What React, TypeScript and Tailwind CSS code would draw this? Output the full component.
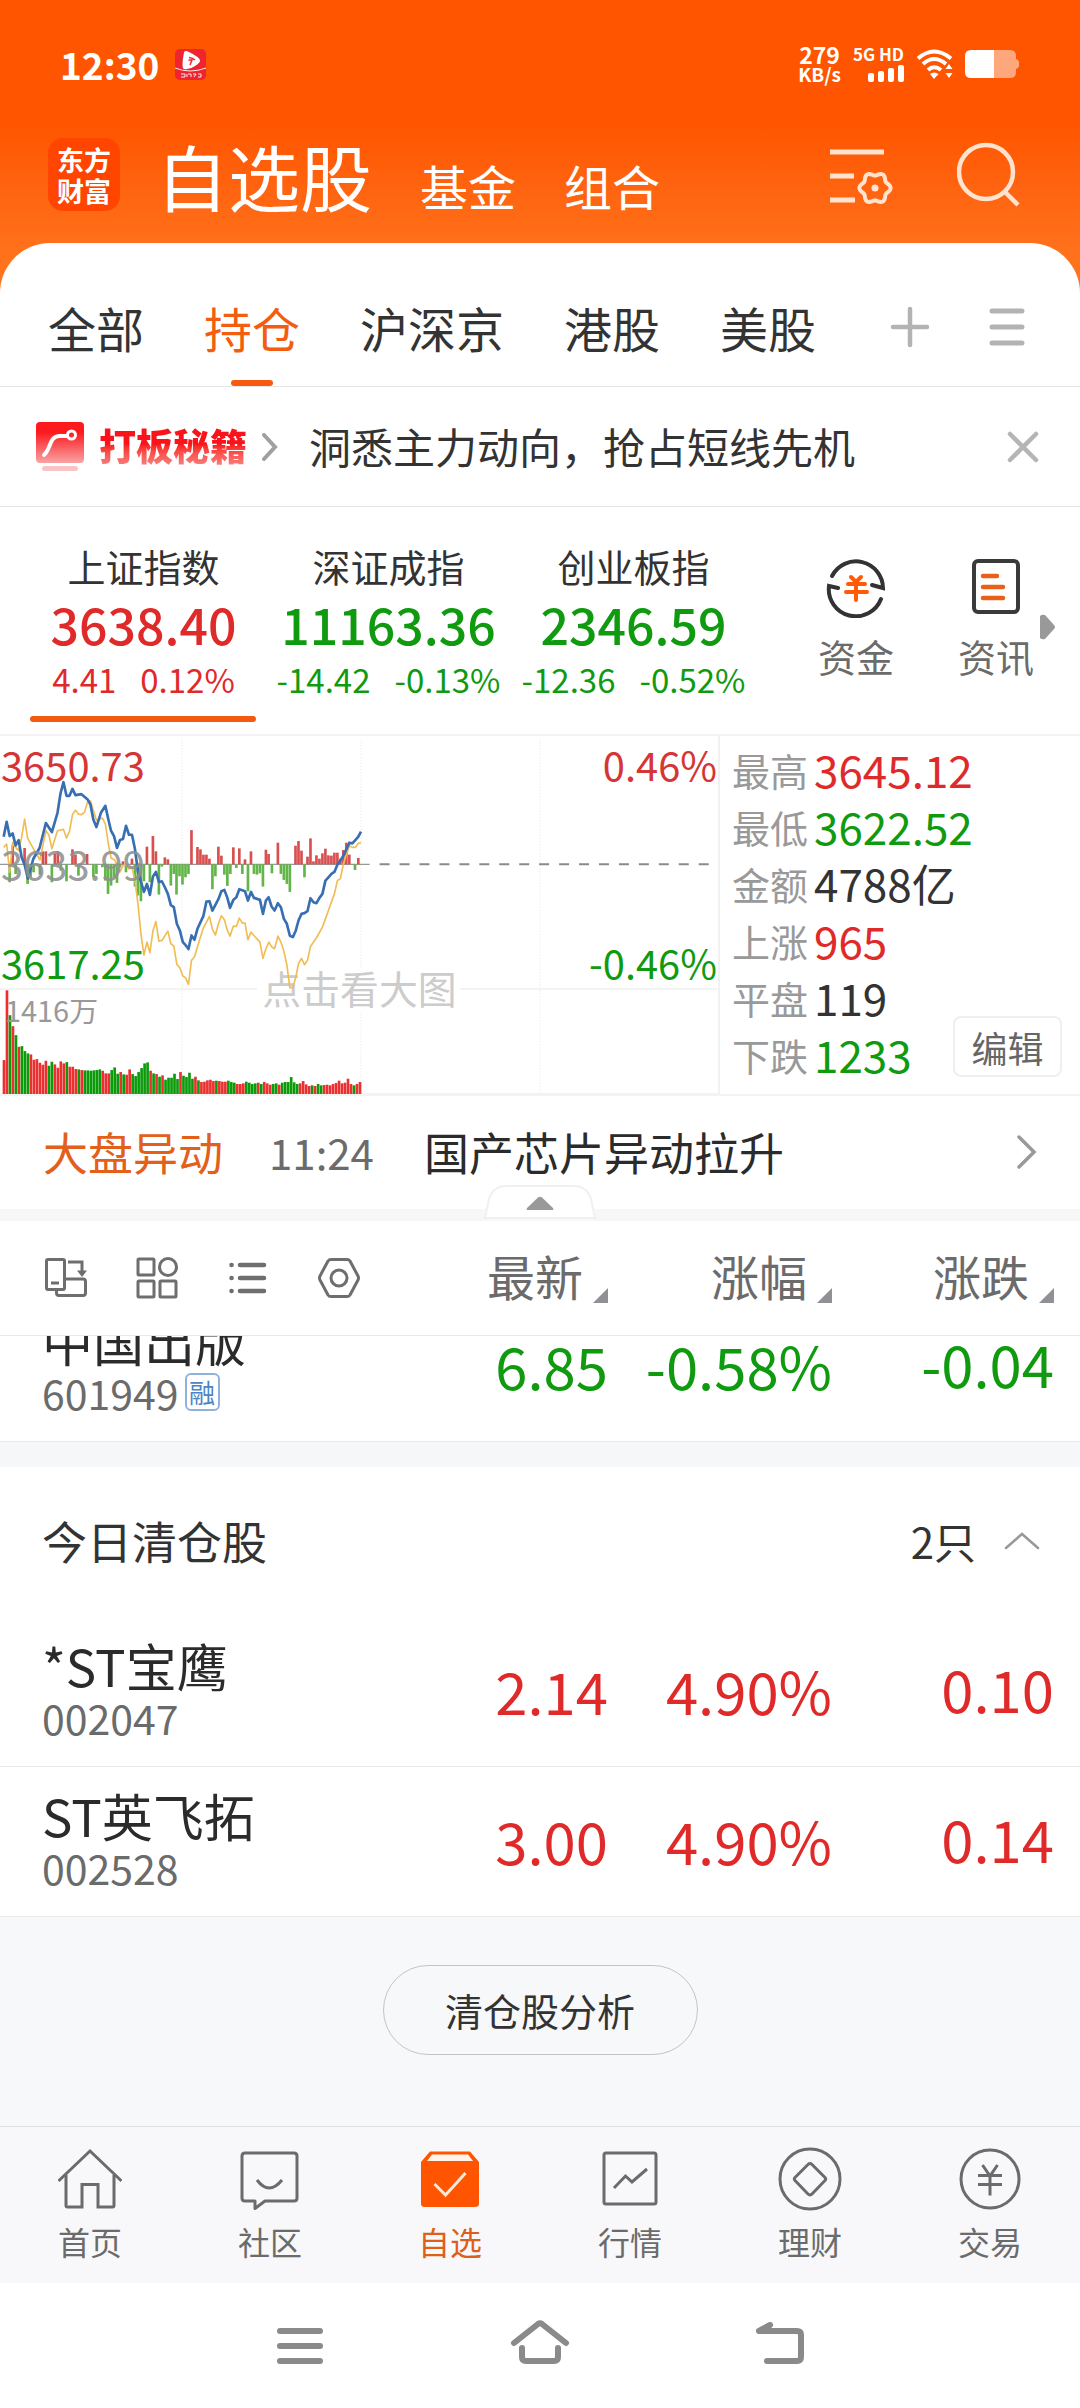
import React from "react";

const GREEN = "#109a10";

const categoryTabs = ["全部", "持仓", "沪深京", "港股", "美股"];

const indices = [
  { name: "上证指数", value: "3638.40", change: "4.41", percent: "0.12%", up: true },
  { name: "深证成指", value: "11163.36", change: "-14.42", percent: "-0.13%", up: false },
  { name: "创业板指", value: "2346.59", change: "-12.36", percent: "-0.52%", up: false },
];

const stats = [
  { label: "最高", value: "3645.12", tone: "text-[#e02a2a]" },
  { label: "最低", value: "3622.52", tone: "text-[#109a10]" },
  { label: "金额", value: "4788亿", tone: "text-[#333333]" },
  { label: "上涨", value: "965", tone: "text-[#e02a2a]" },
  { label: "平盘", value: "119", tone: "text-[#333333]" },
  { label: "下跌", value: "1233", tone: "text-[#109a10]" },
];

type Stock = { name: string; code: string; tag?: string; last: string; percent: string; change: string; up: boolean };

const holdings: Stock[] = [
  { name: "中国出版", code: "601949", tag: "融", last: "6.85", percent: "-0.58%", change: "-0.04", up: false },
];

const cleared: Stock[] = [
  { name: "*ST宝鹰", code: "002047", last: "2.14", percent: "4.90%", change: "0.10", up: true },
  { name: "ST英飞拓", code: "002528", last: "3.00", percent: "4.90%", change: "0.14", up: true },
];

/* Intraday chart data, in a 2160-unit-wide space (three units per pixel). */
const pricePoints =
  "11,318 20,273 29,316 38,308 47,344 56,328 65,380 74,402 84,444 100,385 119,352 138,277 156,304 173,246 182,188 191,154 200,195 209,195 218,174 227,193 245,190 263,205 272,221 281,267 290,289 304,245 317,225 326,266 334,300 343,316 352,352 361,328 370,325 379,285 388,312 397,312 406,355 415,423 424,453 433,484 442,460 451,493 460,438 469,424 478,454 487,452 496,470 505,490 514,524 523,530 532,580 541,600 550,635 559,645 567,656 576,615 585,628 594,595 612,556 621,513 630,512 639,540 657,506 666,482 675,478 684,502 692,532 702,508 711,500 720,476 737,482 746,510 755,484 764,502 782,508 791,550 800,510 808,500 817,528 826,540 836,518 845,530 854,565 863,580 872,616 881,620 890,600 898,570 907,550 916,548 925,542 934,503 943,515 952,518 961,502 970,490 979,450 988,440 997,430 1006,424 1015,402 1024,390 1033,375 1042,356 1051,336 1060,338 1069,328 1078,318 1086,303";
const leadPoints =
  "11,350 20,340 29,425 38,335 47,350 56,360 65,320 74,265 83,322 102,357 120,388 129,345 138,300 147,312 156,354 173,300 191,296 200,322 209,302 218,252 227,238 236,250 245,252 254,245 263,215 272,210 281,240 290,268 308,262 317,280 326,340 334,382 345,388 361,424 370,405 379,402 388,415 397,410 406,450 415,520 424,610 433,674 442,635 451,667 460,602 469,573 478,632 487,630 505,602 514,640 523,647 532,702 541,712 550,737 558,742 567,762 576,690 585,680 603,620 612,592 630,558 639,596 648,614 657,580 666,556 675,568 684,600 692,617 702,587 711,588 720,563 729,578 737,578 746,628 755,605 764,615 782,635 791,684 800,655 809,635 818,650 826,655 836,617 845,635 854,662 863,704 872,772 881,772 890,740 898,700 907,684 916,703 925,690 934,648 952,622 970,590 988,540 1006,490 1015,450 1024,444 1033,400 1042,372 1051,345 1060,350 1069,350 1078,338 1086,336";

const strengthUp: [number, number][] = [
  [38, 345], [74, 352], [129, 362], [138, 362], [165, 370], [174, 362], [218, 356], [227, 372], [262, 370], [370, 392], [397, 384],
  [442, 348], [460, 316], [469, 362], [496, 380], [505, 386], [576, 298], [594, 349], [603, 356], [612, 372], [621, 372], [630, 384],
  [657, 348], [666, 375], [702, 350], [720, 353], [737, 386], [755, 362], [800, 357], [808, 370], [836, 336], [889, 345], [898, 331],
  [907, 360], [925, 378], [934, 323], [943, 392], [952, 374], [961, 384], [970, 368], [979, 354], [988, 374], [997, 375], [1006, 366],
  [1015, 366], [1024, 384], [1033, 358], [1042, 336], [1051, 372], [1078, 382],
];
const strengthDown: [number, number][] = [
  [29, 455], [47, 430], [83, 460], [92, 440], [101, 425], [120, 432], [156, 455], [183, 420], [200, 452], [236, 435], [281, 440],
  [290, 430], [308, 410], [317, 450], [325, 490], [334, 465], [343, 440], [352, 457], [361, 410], [379, 425], [406, 468], [415, 495],
  [424, 512], [433, 452], [451, 455], [478, 492], [487, 408], [514, 465], [523, 430], [531, 492], [540, 437], [549, 462], [558, 440],
  [567, 430], [639, 476], [648, 437], [675, 432], [684, 466], [693, 430], [711, 412], [729, 430], [746, 482], [764, 430], [773, 432],
  [782, 428], [791, 468], [818, 428], [845, 430], [854, 448], [863, 460], [872, 484], [916, 440], [1068, 418],
];

const volumeTops = [
  990, 780, 855, 888, 915, 950, 948, 963, 970, 973, 989, 987, 998, 1004, 992, 1007, 995, 1003, 1013, 994, 1000, 996, 1010, 1010, 1017,
  1018, 1020, 1021, 1021, 1022, 1021, 1020, 1018, 1022, 1030, 1030, 1020, 1012, 1031, 1026, 1033, 1034, 1018, 1032, 1038, 1026, 1014,
  1000, 997, 1022, 1030, 1032, 1040, 1036, 1049, 1043, 1043, 1031, 1047, 1026, 1037, 1041, 1028, 1046, 1040, 1051, 1056, 1055, 1051,
  1049, 1053, 1052, 1053, 1055, 1055, 1052, 1056, 1058, 1062, 1062, 1060, 1055, 1058, 1062, 1060, 1058, 1062, 1056, 1060, 1064, 1062,
  1060, 1064, 1058, 1056, 1056, 1041, 1057, 1062, 1060, 1053, 1063, 1068, 1066, 1068, 1062, 1066, 1065, 1064, 1066, 1062, 1059, 1052,
  1060, 1058, 1046, 1062, 1066, 1062, 1056,
];
const volumeColors =
  "rrgrgrgggrrrrrrggrrrrgrrrgrggggggrrrgggrgrrggggggrgrgrgggggrggggrgrrrrrgrrrgggrrrggggrgrrrggrggggggrrrrgrggrrrrrrrrrrgrr";

/* Six-lobed outline of the settings gear. */
const gearPoints = Array.from({ length: 96 }, (_, i) => {
  const a = (i / 96) * Math.PI * 2;
  const r = 14 + 1.6 * Math.cos(6 * a);
  return `${(46 + r * Math.cos(a)).toFixed(2)},${(45 + r * Math.sin(a)).toFixed(2)}`;
}).join(" ");

function IntradayChart() {
  return (
    <svg viewBox="0 0 720 359" className="block h-auto w-full" role="img" aria-label="上证指数分时图">
      <g transform="translate(0 -5) scale(0.33333)">
        <g stroke="#f4f4f5" strokeWidth="5" strokeDasharray="4 5">
          <path d="M548 24V1090M1086 24V1090M1624 24V1090" />
        </g>
        <path d="M0 776H2158M0 1092H2158" stroke="#f0f0f1" strokeWidth="5" />
        <rect x="773" y="715" width="610" height="125" fill="#fff" />
        <path d="M0 401H1112" stroke="#999" strokeWidth="4" />
        <path d="M1142 401H2134" stroke="#8a8a8a" strokeWidth="6" strokeDasharray="30 30" />
      </g>
      <text x="263" y="269" fontSize="39" fill="#cccccc">点击看大图</text>
      <g transform="translate(0 -5) scale(0.33333)">
        {strengthUp.map(([x, y]) => (
          <rect key={x} x={x - 4} y={y} width="8" height={401 - y} fill="#d94f4f" />
        ))}
        {strengthDown.map(([x, y]) => (
          <rect key={x} x={x - 4} y="401" width="8" height={y - 401} fill="#62b548" />
        ))}
        {volumeTops.map((y, i) => (
          <rect key={i} x={8 + i * 9} y={y} width="8" height={1092 - y} fill={volumeColors[i] === "g" ? "#0a9a0a" : "#ea3030"} />
        ))}
        <polyline points={leadPoints} fill="none" stroke="#f0bd55" strokeWidth="5" strokeLinejoin="round" />
        <polyline points={pricePoints} fill="none" stroke="#386fb3" strokeWidth="8" strokeLinejoin="round" />
      </g>
      <g fontSize="40">
        <text x="1" y="45" fill="#d63535">3650.73</text>
        <text x="1" y="144" fill="#8f8f8f" fillOpacity="0.9">3633.99</text>
        <text x="1" y="244" fill={GREEN}>3617.25</text>
        <text x="719" y="45" fill="#d63535" textAnchor="end">0.46%</text>
        <text x="719" y="244" fill={GREEN} textAnchor="end">-0.46%</text>
      </g>
      <text x="5" y="287" fontSize="29" fill="#999">1416万</text>
    </svg>
  );
}

function StockTable({ rows, label }: { rows: Stock[]; label: string }) {
  return (
    <table className="w-full shrink-0 table-fixed border-collapse" aria-label={label}>
      <colgroup>
        <col />
        <col className="w-[176px]" />
        <col className="w-[224px]" />
        <col className="w-[248px]" />
      </colgroup>
      <tbody>
        {rows.map((s) => (
          <tr key={s.code} className="h-[150px] border-b border-[#e9e9ea]">
            <th scope="row" className="pb-1 pl-[42px] text-left align-middle font-normal">
              <div className="text-[51px] leading-[56px] text-[#2b2b2b]">{s.name}</div>
              <div className="flex items-center gap-1.5 text-[41px] leading-[48px] text-[#6b6b6b]">
                {s.code}
                {s.tag && (
                  <span className="flex h-[38px] w-[35px] items-center justify-center rounded-md border-2 border-[#8db3dc] text-[26px] leading-none text-[#4c84c4]">
                    {s.tag}
                  </span>
                )}
              </div>
            </th>
            {[s.last, s.percent, s.change].map((v, i) => (
              <td
                key={i}
                className={
                  "text-right align-middle text-[58px] leading-[64px] whitespace-nowrap " +
                  (i === 2 ? "pr-[26px] pb-1.5 " : "pb-0.5 ") +
                  (s.up ? "text-[#e02a2a]" : "text-[#109a10]")
                }
              >
                {v}
              </td>
            ))}
          </tr>
        ))}
      </tbody>
    </table>
  );
}

function SortButton({ label }: { label: string }) {
  return (
    <button type="button" className="flex items-end justify-end gap-2.5 pb-1.5 text-[48px] leading-[56px] text-[#6b6b6b]">
      {label}
      <svg width="15" height="15" viewBox="0 0 15 15" aria-hidden="true">
        <path d="M15 0V15H0Z" fill="#909095" />
      </svg>
    </button>
  );
}

function StatusBar() {
  return (
    <div className="flex h-[128px] items-center justify-between pr-[61px] pl-[60px]">
      <div className="flex items-center gap-4">
        <span className="text-[37px] leading-none font-bold">12:30</span>
        <svg width="31" height="31" viewBox="0 0 31 31" aria-hidden="true">
          <rect width="31" height="31" rx="5" fill="#ee2430" />
          <path d="M9 3.500Q10 1 14 3Q24 8 25 11Q26 13 20 17Q14 21 9 20Q6 19 9 3.500Z" fill="#fff" />
          <path d="M14 8.500Q18 9 20 11M13.500 11H17L15 16" stroke="#ee2430" strokeWidth="1.500" fill="none" />
          <path d="M0 19Q15 25 31 19" stroke="#fff" strokeWidth="0.900" fill="none" />
          <path d="M6 25h4v3H6M12 25v3M13 25h3v3M18 25h3l-2 3M23 25h3v3h-3" stroke="#fff" strokeWidth="0.900" fill="none" />
        </svg>
      </div>
      <div className="flex items-center gap-3">
        <div className="text-center font-bold">
          <div className="text-[23px] leading-[20px]">279</div>
          <div className="text-[19px] leading-[20px]">KB/s</div>
        </div>
        <div className="flex flex-col items-end gap-1 font-bold">
          <span className="text-[17px] leading-[14px]">5G HD</span>
          <svg width="36" height="17" viewBox="0 0 36 17" fill="#fff" aria-hidden="true">
            <rect x="0" y="8" width="6" height="9" rx="2" />
            <rect x="10" y="6" width="6" height="11" rx="2" />
            <rect x="20" y="3" width="6" height="14" rx="2" />
            <rect x="30" y="0" width="6" height="17" rx="2" />
          </svg>
        </div>
        <svg width="37" height="30" viewBox="0 0 37 30" fill="none" stroke="#fff" strokeWidth="4" aria-hidden="true">
          <path d="M2 9.500Q18 -4.500 35 9.500M7 15Q18 5 30 15M12 21Q18 15.500 25 21" />
          <path d="M14 25Q18 22 22.500 25L18 30Z" fill="#fff" stroke="none" />
          <path d="M33 15l3.500 5h-7ZM33 29l3.500-5h-7Z" fill="#fff" stroke="none" />
        </svg>
        <svg width="54" height="28" viewBox="0 0 54 28" aria-hidden="true">
          <path d="M29 0H45Q51 0 51 6V9Q54 10 54 12V16Q54 18 51 19V22Q51 28 45 28H29Z" fill="#ffa77c" />
          <path d="M6 0H29V28H6Q0 28 0 22V6Q0 0 6 0Z" fill="#fff" />
        </svg>
      </div>
    </div>
  );
}

function TitleBar() {
  return (
    <div className="flex h-[115px] items-center justify-between pr-[59px] pb-[22px] pl-12">
      <div className="flex items-center gap-9">
        <div className="flex h-[73px] w-[72px] flex-col items-center justify-center rounded-[15px] bg-[#ff4500] text-[27px] leading-[31px] font-bold">
          <span>东方</span>
          <span>财富</span>
        </div>
        <nav className="flex items-baseline gap-12" aria-label="自选分类">
          <a href="#stocks" className="text-[72px] leading-[96px]">自选股</a>
          <a href="#funds" className="text-[48px]">基金</a>
          <a href="#portfolios" className="text-[48px]">组合</a>
        </nav>
      </div>
      <div className="flex items-center gap-16">
        <button type="button" aria-label="列表设置">
          <svg width="64" height="64" viewBox="0 0 64 64" fill="none" stroke="#ffe3cf" strokeWidth="5" aria-hidden="true">
            <path d="M1 9H55M1 33H25M1 57H26" />
            <polygon points={gearPoints} strokeWidth="4" strokeLinejoin="round" />
            <circle cx="46" cy="45" r="3.500" fill="#ffe3cf" stroke="none" />
          </svg>
        </button>
        <button type="button" aria-label="搜索">
          <svg width="64" height="66" viewBox="0 0 64 66" fill="none" stroke="#ffe3cf" strokeWidth="4.500" aria-hidden="true">
            <circle cx="29" cy="30" r="27" />
            <path d="M47 49L61 63" />
          </svg>
        </button>
      </div>
    </div>
  );
}

function CategoryTabs() {
  return (
    <div className="flex h-36 items-center justify-between border-b border-[#e4e4e4] pr-[54px] pl-12">
      <div className="flex h-full gap-[60px] text-[48px]" role="tablist">
        {categoryTabs.map((t) => (
          <button
            key={t}
            type="button"
            role="tab"
            aria-selected={t === "持仓"}
            className={"relative pt-6 " + (t === "持仓" ? "text-[#f25d10]" : "text-[#333333]")}
          >
            {t}
            {t === "持仓" && <span className="absolute bottom-0 left-1/2 h-1.5 w-[42px] -translate-x-1/2 rounded-full bg-[#f55a10]" />}
          </button>
        ))}
      </div>
      <div className="flex items-center gap-[58px] pt-6">
        <button type="button" aria-label="添加分组">
          <svg width="40" height="42" viewBox="0 0 40 42" stroke="#b3b3b3" strokeWidth="4.500" strokeLinecap="round" aria-hidden="true">
            <path d="M20 3V39M3 21H37" />
          </svg>
        </button>
        <button type="button" aria-label="管理分组">
          <svg width="38" height="42" viewBox="0 0 38 42" stroke="#b3b3b3" strokeWidth="5" strokeLinecap="round" aria-hidden="true">
            <path d="M4 5H34M4 21H34M4 37H34" />
          </svg>
        </button>
      </div>
    </div>
  );
}

function PromoBar() {
  return (
    <div className="flex h-[120px] items-center border-b border-[#e4e4e4] pr-[41px] pl-9">
      <a href="#secrets" className="flex items-center">
        <svg width="48" height="50" viewBox="0 0 48 50" aria-hidden="true">
          <defs>
            <linearGradient id="promo" x1="0" y1="0" x2="0" y2="1">
              <stop offset="0.250" stopColor="#fc1a1e" />
              <stop offset="1" stopColor="#f9a3a5" />
            </linearGradient>
          </defs>
          <rect width="48" height="41" rx="4" fill="url(#promo)" />
          <path d="M8 33C15 27 13 15 23 14H31" stroke="#fff" strokeWidth="4" strokeLinecap="round" fill="none" />
          <circle cx="35.500" cy="13" r="4" stroke="#fff" strokeWidth="3" fill="none" />
          <rect x="6" y="44" width="36" height="5" rx="2.500" fill="#f8c4c6" />
        </svg>
        <span className="ml-[15px] bg-gradient-to-b from-[#f8141a] from-45% to-[#f68a8c] to-90% bg-clip-text pb-1 text-[37px] leading-[52px] font-black text-transparent">
          打板秘籍
        </span>
        <svg width="16" height="28" viewBox="0 0 16 28" className="ml-[15px]" fill="none" stroke="#a0a0a0" strokeWidth="4" strokeLinecap="round" aria-hidden="true">
          <path d="M2 2L13 14L2 26" />
        </svg>
      </a>
      <p className="ml-[31px] flex-1 pb-0.5 text-[42px] leading-[52px] text-[#333333]">洞悉主力动向，抢占短线先机</p>
      <button type="button" aria-label="关闭">
        <svg width="32" height="32" viewBox="0 0 32 32" stroke="#b5b5b5" strokeWidth="4.500" strokeLinecap="round" aria-hidden="true">
          <path d="M3 3L29 29M29 3L3 29" />
        </svg>
      </button>
    </div>
  );
}

function IndexStrip() {
  return (
    <div className="flex h-[229px] border-b-2 border-[#f3f3f4]">
      <div className="grid w-[70%] grid-cols-3 pl-[21px]">
        {indices.map((ix, i) => (
          <button
            key={ix.name}
            type="button"
            className={"relative flex flex-col items-center pt-[31px] whitespace-nowrap " + (ix.up ? "text-[#e02a2a]" : "text-[#109a10]")}
          >
            <span className="text-[38px] leading-[56px] text-[#333333]">{ix.name}</span>
            <span className="text-[50px] leading-[59px] font-medium">{ix.value}</span>
            <span className="flex gap-6 text-[33px] leading-[52px]">
              <span>{ix.change}</span>
              <span>{ix.percent}</span>
            </span>
            {i === 0 && <span className="absolute right-2.5 bottom-3 left-[9px] h-1.5 rounded-full bg-[#f25a10]" />}
          </button>
        ))}
      </div>
      <div className="flex flex-1 items-start justify-end pr-6 text-[38px] leading-[56px] text-[#6b6b6b]">
        <a href="#capital" className="mr-16 flex flex-col items-center pt-[49px]">
          <svg width="60" height="62" viewBox="0 0 60 62" fill="none" stroke="#333" strokeWidth="4" aria-hidden="true">
            <path d="M6 20A27 27 0 0 1 57 32L46 29" strokeLinecap="round" />
            <path d="M12 32L3 30A27 27 0 0 0 55 43" strokeLinecap="round" />
            <g stroke="#ff5a08" strokeLinecap="round">
              <path d="M25 21L30 26L35 21M22 28H39M20 36H41M30 27V44" />
            </g>
          </svg>
          <span className="mt-2.5">资金</span>
        </a>
        <a href="#news" className="flex flex-col items-center pt-[49px]">
          <svg width="52" height="62" viewBox="0 0 52 62" fill="none" aria-hidden="true">
            <rect x="4" y="5" width="44" height="51" rx="4" stroke="#3a3a3a" strokeWidth="4" />
            <path d="M13 20H27M13 31H33M13 42H33" stroke="#e8601a" strokeWidth="4.500" strokeLinecap="round" />
          </svg>
          <span className="mt-2.5">资讯</span>
        </a>
        <svg width="16" height="26" viewBox="0 0 16 26" className="mt-[107px] ml-1.5" fill="#999" aria-hidden="true">
          <path d="M0 2Q2 0 5 1L14 11Q16 13 14 15L5 25Q2 26 0 24Z" />
        </svg>
      </div>
    </div>
  );
}

const navItems: { label: string; active?: boolean; icon: React.ReactNode }[] = [
  {
    label: "首页",
    icon: (
      <>
        <path d="M0.500 34L32 4L63.500 34" />
        <path d="M8 28V58.500Q8 60 9.500 60H24V37.500H40V60H54.500Q56 60 56 58.500V28" />
      </>
    ),
  },
  {
    label: "社区",
    icon: (
      <>
        <path d="M7 6H56Q59 6 59 9V51Q59 54 56 54H27L17 61.500V54H7Q4 54 4 51V9Q4 6 7 6Z" strokeLinejoin="round" />
        <path d="M19 33Q31 49 44 33" />
      </>
    ),
  },
  {
    label: "自选",
    active: true,
    icon: (
      <>
        <path d="M3 15L12 4.500H52L61 15V57Q61 60 57 60H7Q3 60 3 57Z" fill="#ff5500" stroke="none" />
        <path d="M14 7.500H50L55 14H9Z" fill="#fff3ea" stroke="none" />
        <path d="M16.500 37L27.500 48L47.500 26" stroke="#ffe9d8" />
      </>
    ),
  },
  {
    label: "行情",
    icon: (
      <>
        <rect x="6" y="6" width="52" height="51" rx="2" />
        <path d="M16 41L27.500 29L34 35L49 22" />
      </>
    ),
  },
  {
    label: "理财",
    icon: (
      <>
        <circle cx="32" cy="32" r="30" />
        <path d="M30 17.500Q32 15.500 34 17.500L47 30.500Q48.500 32 47 33.500L34 47Q32 49 30 47L17 33.500Q15.500 32 17 30.500Z" />
      </>
    ),
  },
  {
    label: "交易",
    icon: (
      <>
        <circle cx="32" cy="32" r="29" />
        <path d="M24.500 18L32 29L39.500 18M20 28.500H44M20 37.500H44M32 28V48.500" />
      </>
    ),
  },
];

export default function App() {
  return (
    <div className="w-full bg-white font-['Noto_Sans_CJK_SC',sans-serif] text-[#333333]">
      <header className="bg-gradient-to-b from-[#ff5500] from-32% to-[#ff731c] to-68% text-white">
        <StatusBar />
        <TitleBar />
        <div className="rounded-t-[50px] bg-white">
          <CategoryTabs />
        </div>
      </header>

      <main>
        <PromoBar />
        <IndexStrip />

        <section className="flex border-b-2 border-[#f3f3f4]">
          <div className="w-2/3 border-r-2 border-[#f1f1f2]">
            <IntradayChart />
          </div>
          <div className="relative flex-1 pt-[5px] pl-3">
            <dl>
              {stats.map((s) => (
                <div key={s.label} className="flex h-[57px] items-center gap-1.5 whitespace-nowrap">
                  <dt className="text-[38px] leading-[57px] text-[#999999]">{s.label}</dt>
                  <dd className={"text-[44px] leading-[57px] " + s.tone}>{s.value}</dd>
                </div>
              ))}
            </dl>
            <button
              type="button"
              className="absolute right-[18px] bottom-[17px] h-[61px] w-[109px] rounded-lg border-2 border-[#efeff0] bg-white text-[36px] leading-[54px] text-[#666666]"
            >
              编辑
            </button>
          </div>
        </section>

        <section className="relative border-b-12 border-[#f6f7f9]">
          <a href="#alert" className="flex h-[113px] items-center pr-[43px] pb-0.5 pl-[43px] text-[45px] leading-[60px]">
            <span className="text-[#e2601a]">大盘异动</span>
            <time className="ml-[46px] text-[42px] text-[#6b6b6b]">11:24</time>
            <span className="ml-[50px] flex-1 text-[#2b2b2b]">国产芯片异动拉升</span>
            <svg width="20" height="36" viewBox="0 0 20 36" fill="none" stroke="#999" strokeWidth="3.500" strokeLinecap="round" aria-hidden="true">
              <path d="M2 3L17 18L2 33" />
            </svg>
          </a>
          <button type="button" aria-label="收起" className="absolute -bottom-2.5 left-1/2 -translate-x-1/2">
            <svg width="112" height="34" viewBox="0 0 112 34" className="block" aria-hidden="true">
              <path d="M1 33L5 14Q9 1 23 1H89Q103 1 107 14L111 33Z" fill="#fff" stroke="#f0f0f2" strokeWidth="2" />
              <path d="M43 23L54 12.500Q56 11 58 12.500L69 23Q70 25 68 25H44Q42 25 43 23Z" fill="#999" />
            </svg>
          </button>
        </section>

        <section>
          <div className="flex h-[115px] items-center border-b border-[#e9e9ea]">
            <div className="flex flex-1 gap-[49px] pl-[45px] text-[#6e6e6e]">
              <button type="button" aria-label="切换布局">
                <svg width="42" height="42" viewBox="0 0 42 42" fill="none" stroke="currentColor" strokeWidth="3" aria-hidden="true">
                  <rect x="1.500" y="2.500" width="18" height="30" rx="1.500" />
                  <path d="M6 26H14M23 5H37V16M20 22H38Q40.500 22 40.500 24.500V36Q40.500 38.500 38 38.500H14Q11.500 38.500 11.500 36V32" />
                  <path d="M32 13.500H42L37 20Z" fill="currentColor" stroke="none" />
                </svg>
              </button>
              <button type="button" aria-label="宫格">
                <svg width="42" height="42" viewBox="0 0 42 42" fill="none" stroke="currentColor" strokeWidth="3" aria-hidden="true">
                  <rect x="2" y="2" width="16" height="16" rx="1" />
                  <circle cx="32" cy="10" r="8.500" />
                  <rect x="2" y="24" width="16" height="16" rx="1" />
                  <rect x="24" y="24" width="16" height="16" rx="1" />
                </svg>
              </button>
              <button type="button" aria-label="列表">
                <svg width="42" height="42" viewBox="0 0 42 42" fill="none" stroke="currentColor" strokeWidth="4.500" strokeLinecap="round" aria-hidden="true">
                  <path d="M4.500 8H4.600M4.500 21H4.600M4.500 34H4.600M13 8H37M13 21H37M13 34H37" />
                </svg>
              </button>
              <button type="button" aria-label="设置">
                <svg width="42" height="42" viewBox="0 0 42 42" fill="none" stroke="currentColor" strokeWidth="3" strokeLinejoin="round" aria-hidden="true">
                  <path d="M13 2.500H29Q31 2.500 32 4L40 19Q41 21 40 23L32 38Q31 39.500 29 39.500H13Q11 39.500 10 38L2 23Q1 21 2 19L10 4Q11 2.500 13 2.500Z" />
                  <circle cx="21" cy="21" r="8" />
                </svg>
              </button>
            </div>
            <div className="flex w-[176px] justify-end">
              <SortButton label="最新" />
            </div>
            <div className="flex w-[224px] justify-end">
              <SortButton label="涨幅" />
            </div>
            <div className="flex w-[248px] justify-end pr-[26px]">
              <SortButton label="涨跌" />
            </div>
          </div>

          <div className="flex h-[106px] flex-col justify-end overflow-hidden">
            <StockTable rows={holdings} label="持仓股" />
          </div>
        </section>

        <section className="border-t-[25px] border-[#f6f7f9]">
          <div className="flex h-[149px] items-center justify-between pr-10 pb-0.5 pl-[42px]">
            <h2 className="text-[45px] leading-[60px]">今日清仓股</h2>
            <button type="button" className="flex items-center gap-7 text-[42px] leading-[60px]">
              2只
              <svg width="36" height="20" viewBox="0 0 36 20" fill="none" stroke="#999" strokeWidth="2.500" strokeLinecap="round" aria-hidden="true">
                <path d="M2 17L18 3L34 17" />
              </svg>
            </button>
          </div>
          <StockTable rows={cleared} label="今日清仓股" />
        </section>

        <div className="flex justify-center bg-[#f7f8fa] pt-12 pb-[71px]">
          <button type="button" className="h-[90px] w-[315px] rounded-full border border-[#c4c4c6] text-[38px] leading-[84px] text-[#333333]">
            清仓股分析
          </button>
        </div>
      </main>

      <nav className="grid h-[157px] grid-cols-6 border-t border-[#dde0e2] bg-[#f8f8fa]" aria-label="主导航">
        {navItems.map((n) => (
          <a
            key={n.label}
            href={"#" + n.label}
            className={"flex flex-col items-center pt-5 text-[32px] leading-[56px] " + (n.active ? "text-[#dd5f1c]" : "text-[#6b6b6b]")}
          >
            <svg width="64" height="64" viewBox="0 0 64 64" fill="none" stroke="#6b6b6b" strokeWidth="3" aria-hidden="true">
              {n.icon}
            </svg>
            <span className="mt-0.5">{n.label}</span>
          </a>
        ))}
      </nav>

      <div className="mx-auto grid h-[126px] w-2/3 grid-cols-3 place-items-center">
        <button type="button" aria-label="最近任务">
          <svg width="60" height="48" viewBox="0 0 60 48" fill="none" stroke="#8a8a8a" strokeWidth="6" strokeLinecap="round" aria-hidden="true">
            <path d="M10 9H50M10 24H50M10 39H50" />
          </svg>
        </button>
        <button type="button" aria-label="主屏幕">
          <svg width="60" height="48" viewBox="0 0 60 48" className="overflow-visible" fill="none" stroke="#8a8a8a" strokeWidth="6" strokeLinecap="round" strokeLinejoin="round" aria-hidden="true">
            <path d="M4 21L28 2Q30 0.500 32 2L56 21M12 26V35Q12 39 16 39H44Q48 39 48 35V26" />
          </svg>
        </button>
        <button type="button" aria-label="返回">
          <svg width="60" height="48" viewBox="0 0 60 48" fill="none" stroke="#8a8a8a" strokeWidth="6" strokeLinecap="round" strokeLinejoin="round" aria-hidden="true">
            <path d="M20 3L9 9H47Q51 9 51 13V35Q51 39 47 39H17" />
          </svg>
        </button>
      </div>
    </div>
  );
}
